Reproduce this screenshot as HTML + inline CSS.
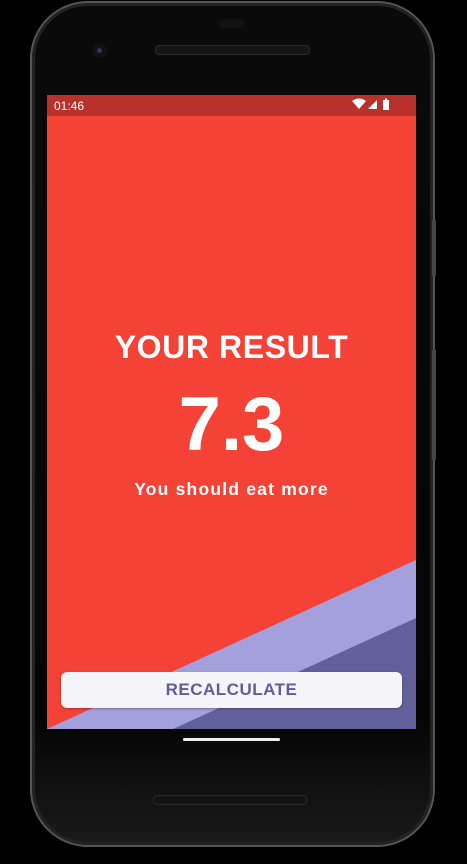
<!DOCTYPE html>
<html><head><style>
html,body{margin:0;padding:0;background:#000;width:467px;height:864px;overflow:hidden;font-family:"Liberation Sans",sans-serif}
.phone{position:absolute;left:30px;top:1px;width:405px;height:846px;border-radius:58px;background:linear-gradient(#0a0a0a,#050505 85%,#1a1a1a);border:2px solid #555;box-sizing:border-box;box-shadow:inset 0 0 0 3px #222}
.btn1{position:absolute;left:432px;top:220px;width:4px;height:56px;background:#444}
.btn2{position:absolute;left:432px;top:350px;width:4px;height:110px;background:#444}
.screen{position:absolute;left:47px;top:95px;width:369px;height:634px;background:#f44336;overflow:hidden}
.status{position:absolute;left:0;top:0;width:369px;height:21px;background:#b9312b;color:#fff;font-size:12px}
.t{position:absolute;color:#fff;text-align:center;left:0;width:369px;font-weight:bold}
.rc{position:absolute;left:14px;top:577px;width:341px;height:36px;border-radius:6px;background:#f5f4f9;color:#5f5e9a;font-weight:bold;font-size:17px;letter-spacing:0.5px;text-align:center;line-height:36px;box-shadow:0 1px 2px rgba(0,0,0,.3)}
</style></head><body>
<div class="phone"></div>
<div class="btn1"></div><div class="btn2"></div>
<div style="position:absolute;left:218px;top:19px;width:27px;height:9px;border-radius:5px;background:#111"></div>
<div style="position:absolute;left:92px;top:43px;width:15px;height:15px;border-radius:50%;background:#111"><div style="margin:5px;width:5px;height:5px;border-radius:50%;background:#335"></div></div>
<div style="position:absolute;left:155px;top:45px;width:153px;height:8px;border-radius:4px;background:#161616;border:1px solid #2a2a2a"></div>
<div style="position:absolute;left:153px;top:795px;width:152px;height:8px;border-radius:4px;background:#141414;border:1px solid #2a2a2a"></div>
<div class="screen">
<svg width="369" height="634" style="position:absolute;left:0;top:0">
<polygon points="369,465 369,634 0,634" fill="#a3a0db"/>
<polygon points="369,523 369,634 126,634" fill="#62609a"/>
</svg>
<div class="status"><span style="position:absolute;left:7px;top:4px">01:46</span>
<svg style="position:absolute;left:305px;top:3px" width="40" height="13"><path d="M0 3 Q7 -2 14 3 L7 11 Z" fill="#fff"/><path d="M16 11 L25 2 L25 11 Z" fill="#fff"/><rect x="31" y="2" width="6" height="10" fill="#fff"/><rect x="33" y="0.5" width="2" height="1.5" fill="#fff"/></svg></div>
<div class="t" style="top:234px;font-size:32px;letter-spacing:0.6px">YOUR RESULT</div>
<div class="t" style="top:286px;font-size:76px">7.3</div>
<div class="t" style="top:384px;font-size:17.5px;letter-spacing:1.2px">You should eat more</div>
<div class="rc">RECALCULATE</div>
</div>
<div style="position:absolute;left:183px;top:738px;width:97px;height:3px;border-radius:2px;background:#eee"></div>
</body></html>
